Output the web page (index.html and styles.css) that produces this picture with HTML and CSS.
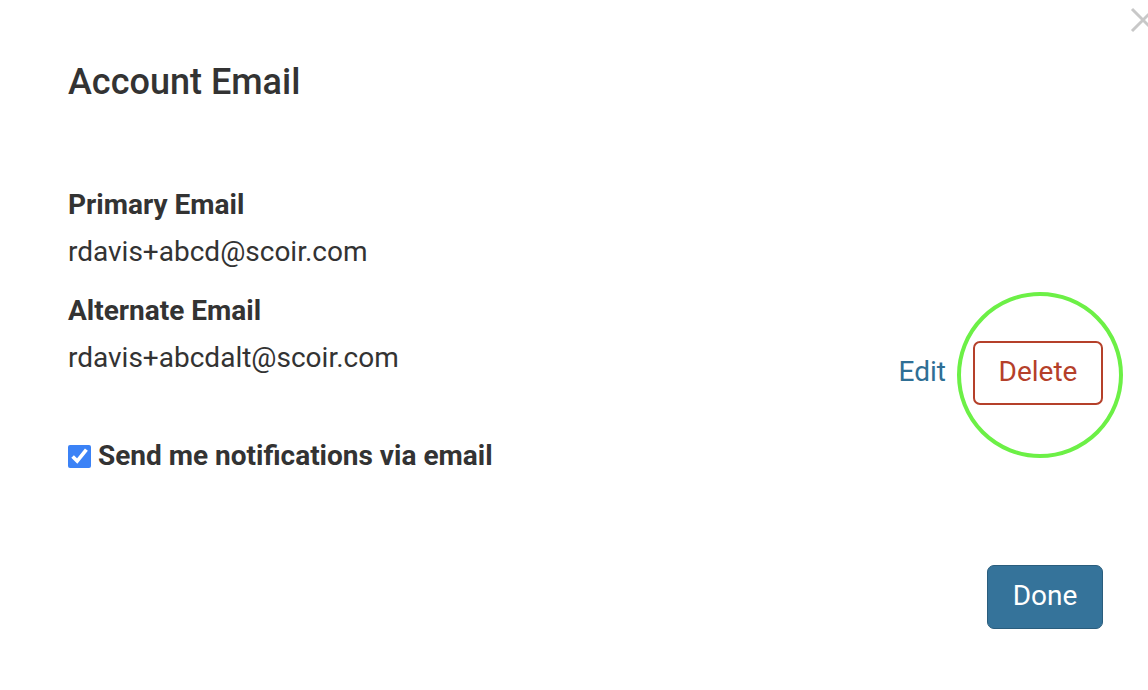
FILE: index.html
```html
<!DOCTYPE html>
<html>
<head>
<meta charset="utf-8" />
<title>Account Email</title>
<link rel="stylesheet" href="styles.css">
</head>
<body>
<div class="modal">
 <a class="closeX" href="#"><svg width="40" height="40" viewBox="0 0 40 40"><path d="M9 9 L31 31 M31 9 L9 31" stroke="#c8c8c8" stroke-width="3" fill="none"/></svg></a>

 <h1 class="title">Account Email</h1>

 <div class="label first">Primary Email</div>
 <div class="value">rdavis+abcd@scoir.com</div>

 <div class="label">Alternate Email</div>
 <div class="emailRow">
  <div class="value">rdavis+abcdalt@scoir.com</div>
  <div class="actions">
   <a class="editLink" href="#">Edit</a>
   <span class="highlight"><button class="deleteBtn">Delete</button></span>
  </div>
 </div>

 <label class="notify"><input type="checkbox" checked> Send me notifications via email</label>

 <div class="footer">
  <button class="doneBtn">Done</button>
 </div>
</div>
</body>
</html>
```

FILE: styles.css
```css
body {
margin:0; background:#fff;
font-family: Roboto, "Liberation Sans", sans-serif; color:#333;
}
.modal {
position:relative; width:1148px; height:690px; box-sizing:border-box;
padding:62px 45px 0 68px; overflow:hidden;
}
.closeX { position:absolute; top:0; right:-15px; display:block; }
.title { margin:0; font-size:36px; font-weight:500; line-height:40px; }
.label { font-size:28px; font-weight:700; line-height:32px; margin-top:27px; }
.label.first { margin-top:87px; }
.value { font-size:28px; line-height:32px; margin-top:15px; }
.emailRow { display:flex; justify-content:space-between; align-items:flex-start; }
.actions { display:flex; align-items:center; gap:27px; margin-top:14px; }
.editLink { color:#2f6f95; text-decoration:none; font-size:28px; line-height:30px; margin-top:-2px; }
.highlight { position:relative; display:inline-block; }
.highlight::after {
content:""; position:absolute; left:50%; top:50%;
width:158px; height:158px; margin:-81px 0 0 -81px;
border:4px solid #6cf046; border-radius:50%;
}
.deleteBtn {
width:130px; height:64px; background:#fff; border:2px solid #b5402a; border-radius:7px;
color:#b5402a; font-family:inherit; font-size:28px; line-height:28px; padding:0 0 2px; cursor:pointer;
}
.notify {
display:flex; align-items:center; gap:7px; margin-top:35px;
font-size:28px; font-weight:700; line-height:32px;
}
.notify input { width:23px; height:23px; margin:0; accent-color:#3b82f6; }
.footer { display:flex; justify-content:flex-end; margin-top:93px; }
.doneBtn {
width:116px; height:64px; background:#35739a; border:1px solid #2a5d7d; border-radius:7px;
color:#fff; font-family:inherit; font-size:28px; line-height:28px; padding:0 0 2px; cursor:pointer;
}
```
